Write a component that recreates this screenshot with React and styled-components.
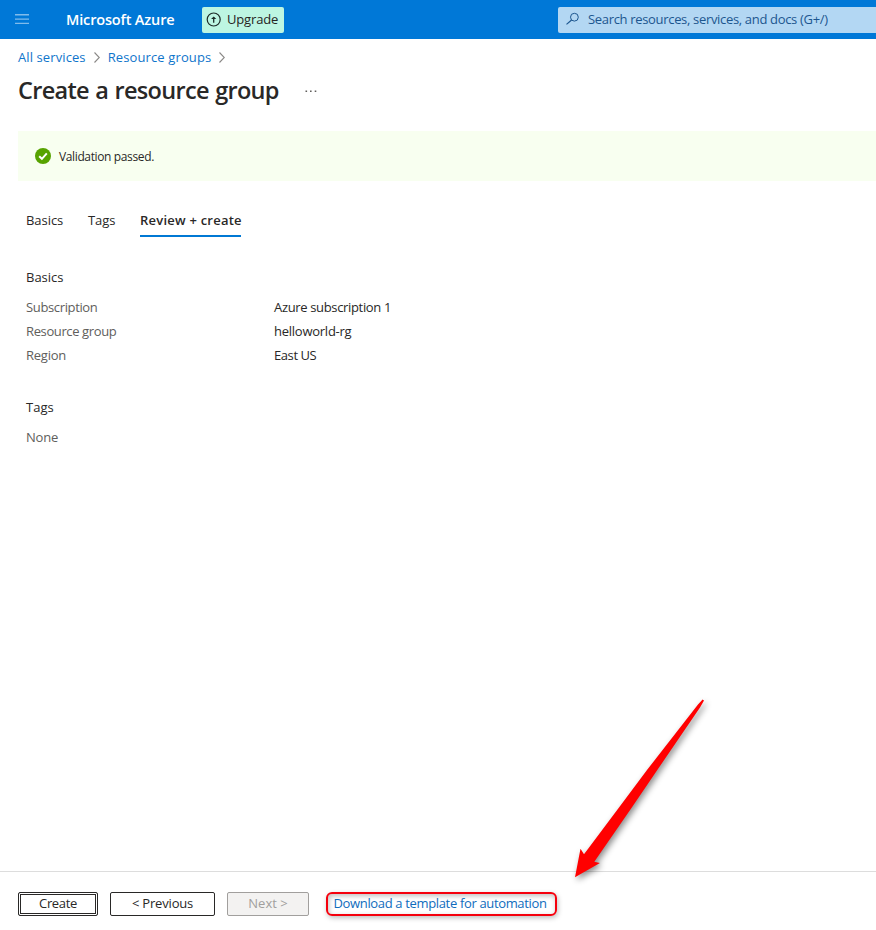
import React from 'react';
import styled, { createGlobalStyle } from 'styled-components';

const GlobalStyle = createGlobalStyle`
  * { box-sizing: border-box; }
  html, body { margin: 0; padding: 0; background: #fff; overflow: hidden; }
  body { font-family: 'Open Sans', 'Noto Sans', sans-serif; font-size: 13px; color: #292827; }
  button { font: inherit; }
  h1, h2, p, dl, dt, dd { margin: 0; font-weight: 400; }
  svg { display: block; flex: none; }
`;

const Page = styled.div`
  position: relative;
  display: flex;
  flex-direction: column;
  height: 930px;
  overflow: hidden;
`;

const Label = styled.span`
  letter-spacing: ${({ $tracking = 0 }) => $tracking}px;
  white-space: nowrap;
`;

const TopBar = styled.header`
  display: flex;
  align-items: center;
  flex: none;
  height: 39px;
  padding-left: 15px;
  background: #0078d7;
`;

const MenuButton = styled.button`
  width: 51px;
  padding: 0;
  border: 0;
  background: none;
`;

const Brand = styled.div`
  width: 136px;
  color: #fff;
  font-size: 14.5px;
  font-weight: 600;
  line-height: 20px;
  padding-top: 1px;
`;

const UpgradeButton = styled.button`
  display: flex;
  align-items: center;
  gap: 6px;
  width: 82px;
  height: 26px;
  padding: 0 0 1px 4px;
  border: 0;
  border-radius: 2px;
  background: #bdf6e2;
  color: #252423;
  font-weight: 520;
  line-height: 17px;
`;

const SearchBox = styled.div`
  display: flex;
  align-items: center;
  gap: 8px;
  width: 318px;
  height: 26px;
  margin-left: auto;
  padding: 0 0 1px 8px;
  border-radius: 2px 0 0 2px;
  background: #b3d7f3;
  color: #1c568f;
  line-height: 17px;
`;

const Breadcrumbs = styled.nav`
  display: flex;
  align-items: center;
  gap: 8px;
  flex: none;
  height: 20px;
  margin: 8px 0 0 18px;
  color: #0f75cb;
`;

const TitleRow = styled.div`
  display: flex;
  align-items: center;
  gap: 26px;
  flex: none;
  height: 34px;
  margin: 7px 0 0 18px;
`;

const Title = styled.h1`
  width: 261px;
  font-size: 23.5px;
  line-height: 32px;
  padding-bottom: 2px;
  word-spacing: 1px;
  white-space: nowrap;
  && { font-weight: 540; }
`;

const Banner = styled.div`
  display: flex;
  align-items: center;
  gap: 8px;
  flex: none;
  height: 50px;
  margin: 23px 0 0 18px;
  padding-left: 17px;
  background: #f8fff0;
  font-size: 12px;
`;

const Tabs = styled.nav`
  display: flex;
  gap: 24.7px;
  flex: none;
  margin: 27px 0 0 26px;
`;

const Tab = styled.div`
  height: 29px;
  line-height: 24px;
  white-space: nowrap;
  ${({ $active }) => $active && 'border-bottom: 2px solid #0078d4; font-weight: 580; width: 101px;'}
`;

const Section = styled.section`
  flex: none;
  margin: ${({ $top }) => $top}px 0 0 26px;
  line-height: 24px;
`;

const SectionTitle = styled.h2`
  && { font-size: 13px; }
  margin-bottom: 6px;
`;

const Details = styled.dl`
  display: grid;
  grid-template-columns: 248px 1fr;
  grid-auto-rows: 24px;
`;

const Term = styled.dt`
  color: #605e5c;
`;

const Footer = styled.footer`
  display: flex;
  align-items: flex-start;
  height: 59px;
  flex: none;
  margin-top: auto;
  padding: 20px 0 0 18px;
  border-top: 1px solid #dddddd;
`;

const FooterButton = styled.button`
  width: ${({ $width }) => $width}px;
  height: 24px;
  margin-right: ${({ $gap = 12 }) => $gap}px;
  padding: 0 0 2px;
  border: 1px solid ${({ disabled }) => (disabled ? '#a19f9d' : '#292827')};
  border-radius: 2px;
  background: ${({ disabled }) => (disabled ? '#f3f2f1' : '#fff')};
  color: ${({ disabled }) => (disabled ? '#a19f9d' : '#292827')};
  font-weight: 530;
  line-height: 20px;
  ${({ $focused }) => $focused && 'box-shadow: inset 0 0 0 1px #fff, inset 0 0 0 2px #292827;'}
`;

const HighlightedLink = styled.a`
  display: block;
  width: 231px;
  height: 24px;
  padding-left: 6px;
  border: 2px solid #f5000d;
  border-radius: 6px;
  box-shadow: 1px 2px 5px rgba(0, 0, 0, 0.25), inset 1px 2px 5px rgba(0, 0, 0, 0.25);
  color: #0f6cbd;
  line-height: 18px;
  text-decoration: none;
`;

const Pointer = styled.svg`
  position: absolute;
  left: 560px;
  top: 690px;
  filter: drop-shadow(2px 3px 3px rgba(0, 0, 0, 0.45));
`;

const Chevron = () => (
  <svg width="6" height="12" viewBox="0 0 6 12" fill="none" stroke="#8a8886" strokeWidth="1.1">
    <path d="M.5 1.5 5.3 6.5 .5 11.5" />
  </svg>
);

const MenuIcon = () => (
  <svg width="14" height="11" viewBox="0 0 14 11" fill="#80bbeb">
    <path d="M0 0h14v1.4H0zM0 4.4h14v1.3H0zM0 8.7h14v1.4H0z" />
  </svg>
);

const UpgradeIcon = () => (
  <svg width="15" height="15" viewBox="0 0 15 15" fill="none" stroke="#1c2b27" strokeWidth="1.2">
    <circle cx="7.7" cy="7.5" r="6.5" />
    <path d="M7.7 10.7V5.3" strokeWidth="1.3" />
    <path d="M5.1 7.1 7.7 4.4l2.6 2.7z" fill="#1c2b27" stroke="none" />
  </svg>
);

const SearchIcon = () => (
  <svg width="14" height="14" viewBox="0 0 14 14" fill="none" stroke="#1c568f">
    <circle cx="8.4" cy="5.2" r="3.9" />
    <path d="M5.6 8 .5 12.4" strokeWidth="1.2" />
  </svg>
);

const SuccessIcon = () => (
  <svg width="16" height="16" viewBox="0 0 16 16">
    <circle cx="8" cy="8" r="8" fill="#57a300" />
    <path d="M4.2 8.2 6.9 10.8 11.8 5.4" fill="none" stroke="#fff" strokeWidth="2" />
  </svg>
);

const MoreIcon = () => (
  <svg width="12" height="4" viewBox="0 0 12 4" fill="#605e5c">
    <path d="M.5 1.5h1.6V3H.5zM5 1.5h1.6V3H5zM9.7 1.5h1.6V3H9.7z" />
  </svg>
);

const details = [
  { name: 'Subscription', nameTracking: -0.36, value: 'Azure subscription 1', valueTracking: -0.34 },
  { name: 'Resource group', nameTracking: -0.38, value: 'helloworld-rg', valueTracking: -0.25 },
  { name: 'Region', nameTracking: -0.25, value: 'East US', valueTracking: -0.42 },
];

export default function App() {
  return (
    <Page>
      <GlobalStyle />
      <TopBar>
        <MenuButton aria-label="Menu"><MenuIcon /></MenuButton>
        <Brand><Label $tracking={-0.15}>Microsoft Azure</Label></Brand>
        <UpgradeButton>
          <UpgradeIcon />
          <Label $tracking={-0.16}>Upgrade</Label>
        </UpgradeButton>
        <SearchBox>
          <SearchIcon />
          <Label $tracking={-0.325}>Search resources, services, and docs (G+/)</Label>
        </SearchBox>
      </TopBar>

      <Breadcrumbs>
        <Label $tracking={0.1}>All services</Label>
        <Chevron />
        <Label $tracking={0.12}>Resource groups</Label>
        <Chevron />
      </Breadcrumbs>

      <TitleRow>
        <Title><Label $tracking={-0.7}>Create a resource group</Label></Title>
        <MoreIcon />
      </TitleRow>

      <Banner>
        <SuccessIcon />
        <Label $tracking={-0.37}>Validation passed.</Label>
      </Banner>

      <Tabs>
        <Tab><Label $tracking={-0.05}>Basics</Label></Tab>
        <Tab><Label $tracking={-0.05}>Tags</Label></Tab>
        <Tab $active><Label $tracking={0.22}>Review + create</Label></Tab>
      </Tabs>

      <Section $top={28}>
        <SectionTitle>Basics</SectionTitle>
        <Details>
          {details.map((item) => (
            <React.Fragment key={item.name}>
              <Term><Label $tracking={item.nameTracking}>{item.name}</Label></Term>
              <dd><Label $tracking={item.valueTracking}>{item.value}</Label></dd>
            </React.Fragment>
          ))}
        </Details>
      </Section>

      <Section $top={28}>
        <SectionTitle>Tags</SectionTitle>
        <Details>
          <Term><Label $tracking={-0.2}>None</Label></Term>
        </Details>
      </Section>

      <Footer>
        <FooterButton $width={80} $focused><Label $tracking={-0.35}>Create</Label></FooterButton>
        <FooterButton $width={105}><Label $tracking={-0.18}>&lt; Previous</Label></FooterButton>
        <FooterButton $width={82} $gap={16.5} disabled><Label>Next &gt;</Label></FooterButton>
        <HighlightedLink href="#"><Label $tracking={-0.345}>Download a template for automation</Label></HighlightedLink>
      </Footer>

      <Pointer width="160" height="200" viewBox="0 0 160 200" fill="#ff0000">
        <path d="M142.6 9.5 144 10.5 140 17.5 97.3 80 71.8 117.5 34.3 171.7 39.9 173 15 187.3 20.5 158.8 24 164.3 59 117.5 87 80 138 14.5Z" />
      </Pointer>
    </Page>
  );
}
